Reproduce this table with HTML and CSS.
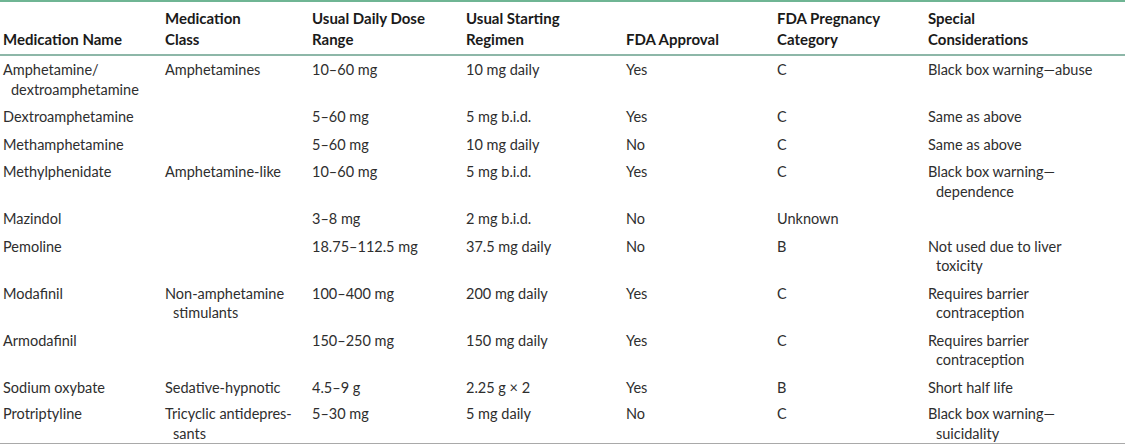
FILE: index.html
```html
<!DOCTYPE html>
<html>
<head>
<meta charset="utf-8">
<link rel="stylesheet" href="styles.css">
</head>
<body>
<table class="drugs">
  <colgroup>
    <col class="c1"><col class="c2"><col class="c3"><col class="c4"><col class="c5"><col class="c6"><col class="c7">
  </colgroup>
  <thead>
    <tr>
      <th>Medication Name</th>
      <th>Medication<br>Class</th>
      <th>Usual Daily Dose<br>Range</th>
      <th>Usual Starting<br>Regimen</th>
      <th>FDA Approval</th>
      <th>FDA Pregnancy<br>Category</th>
      <th>Special<br>Considerations</th>
    </tr>
  </thead>
  <tbody>
    <tr><td>Amphetamine/<br>dextroamphetamine</td><td>Amphetamines</td><td>10–60 mg</td><td>10 mg daily</td><td>Yes</td><td>C</td><td>Black box warning—abuse</td></tr>
    <tr><td>Dextroamphetamine</td><td></td><td>5–60 mg</td><td>5 mg b.i.d.</td><td>Yes</td><td>C</td><td>Same as above</td></tr>
    <tr><td>Methamphetamine</td><td></td><td>5–60 mg</td><td>10 mg daily</td><td>No</td><td>C</td><td>Same as above</td></tr>
    <tr><td>Methylphenidate</td><td>Amphetamine-like</td><td>10–60 mg</td><td>5 mg b.i.d.</td><td>Yes</td><td>C</td><td>Black box warning—<br>dependence</td></tr>
    <tr><td>Mazindol</td><td></td><td>3–8 mg</td><td>2 mg b.i.d.</td><td>No</td><td>Unknown</td><td></td></tr>
    <tr><td>Pemoline</td><td></td><td>18.75–112.5 mg</td><td>37.5 mg daily</td><td>No</td><td>B</td><td>Not used due to liver<br>toxicity</td></tr>
    <tr><td>Modafinil</td><td>Non-amphetamine<br>stimulants</td><td>100–400 mg</td><td>200 mg daily</td><td>Yes</td><td>C</td><td>Requires barrier<br>contraception</td></tr>
    <tr><td>Armodafinil</td><td></td><td>150–250 mg</td><td>150 mg daily</td><td>Yes</td><td>C</td><td>Requires barrier<br>contraception</td></tr>
    <tr><td>Sodium oxybate</td><td>Sedative-hypnotic</td><td>4.5–9 g</td><td>2.25 g × 2</td><td>Yes</td><td>B</td><td>Short half life</td></tr>
    <tr class="last"><td>Protriptyline</td><td>Tricyclic antidepres-<br>sants</td><td>5–30 mg</td><td>5 mg daily</td><td>No</td><td>C</td><td>Black box warning—<br>suicidality</td></tr>
  </tbody>
</table>
</body>
</html>
```
FILE: styles.css
```css
html, body {
  margin: 0;
  padding: 0;
  background: #ffffff;
}
body {
  width: 1125px;
  height: 444px;
  overflow: hidden;
  font-family: "Lato", "Open Sans", sans-serif;
  font-size: 14.5px;
  color: #2e2e2e;
}
.drugs {
  width: 1125px;
  border-collapse: collapse;
  table-layout: fixed;
  border-top: 2px solid #6fb594;
  border-bottom: 1px solid #a9a9a9;
}
.c1 { width: 162px; }
.c2 { width: 147px; }
.c3 { width: 154px; }
.c4 { width: 160px; }
.c5 { width: 151px; }
.c6 { width: 151px; }
.c7 { width: 200px; }
.drugs th {
  text-align: left;
  vertical-align: bottom;
  font-weight: bold;
  font-size: 15px;
  color: #1a1a1a;
  line-height: 21px;
  padding: 6px 4px 4px 3px;
  border-bottom: 2px solid #8db7a8;
  white-space: nowrap;
}
.drugs td {
  vertical-align: top;
  line-height: 19.5px;
  padding: 4px 4px 4px 11px;
  text-indent: -8px;
  white-space: nowrap;
}
.drugs tr.last td {
  padding-top: 3px;
  padding-bottom: 0;
}
```
